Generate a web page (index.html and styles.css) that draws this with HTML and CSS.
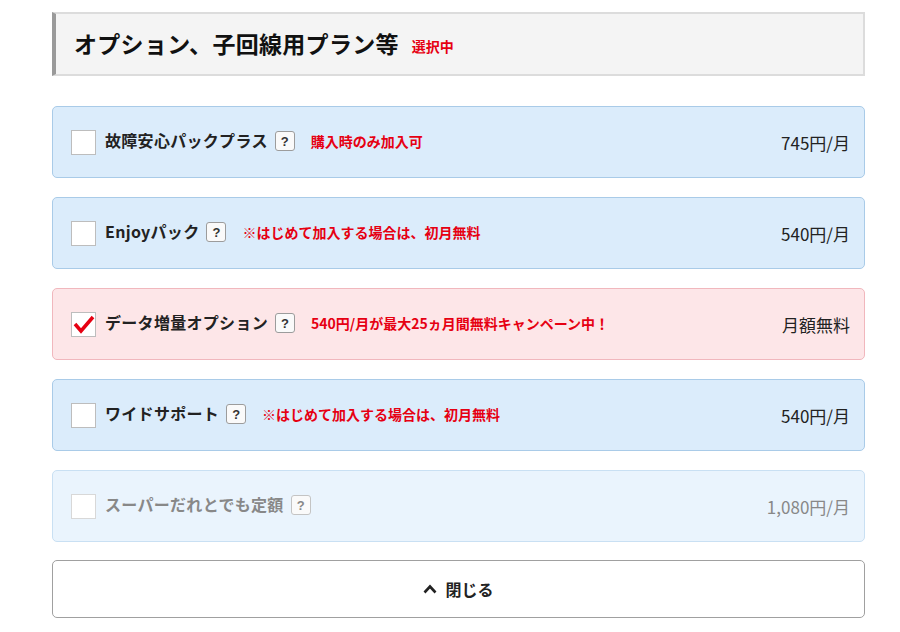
FILE: index.html
```html
<!DOCTYPE html>
<html lang="ja">
<head>
  <meta charset="UTF-8">
  <title>オプション、子回線用プラン等</title>
  <link rel="stylesheet" href="styles.css">
</head>
<body>
  <div class="wrap">
    <div class="section-head">
      <h2>オプション、子回線用プラン等</h2>
      <span class="selected">選択中</span>
    </div>

    <ul class="options">
      <li class="option">
        <span class="check"></span>
        <span class="name">故障安心パックプラス</span>
        <span class="help">?</span>
        <span class="note">購入時のみ加入可</span>
        <span class="price">745円/月</span>
      </li>
      <li class="option">
        <span class="check"></span>
        <span class="name">Enjoyパック</span>
        <span class="help">?</span>
        <span class="note">※はじめて加入する場合は、初月無料</span>
        <span class="price">540円/月</span>
      </li>
      <li class="option is-checked">
        <span class="check">
          <svg viewBox="0 0 25 25" width="25" height="25"><polyline points="4,12 10,19 22,5" fill="none" stroke="#e60012" stroke-width="3.5" stroke-linejoin="miter"/></svg>
        </span>
        <span class="name">データ増量オプション</span>
        <span class="help">?</span>
        <span class="note">540円/月が最大25ヵ月間無料キャンペーン中！</span>
        <span class="price">月額無料</span>
      </li>
      <li class="option">
        <span class="check"></span>
        <span class="name">ワイドサポート</span>
        <span class="help">?</span>
        <span class="note">※はじめて加入する場合は、初月無料</span>
        <span class="price">540円/月</span>
      </li>
      <li class="option is-disabled">
        <span class="check"></span>
        <span class="name">スーパーだれとでも定額</span>
        <span class="help">?</span>
        <span class="price">1,080円/月</span>
      </li>
    </ul>

    <button class="close-btn">
      <svg viewBox="0 0 14 10" width="14" height="10"><polyline points="1.5,8.5 7,2.5 12.5,8.5" fill="none" stroke="#222" stroke-width="2.6"/></svg>
      閉じる
    </button>
  </div>
</body>
</html>
```

FILE: styles.css
```css
body {
  margin: 0;
  background: #fff;
  color: #222;
  font-family: "Noto Sans CJK JP", "Noto Sans", sans-serif;
}
.wrap {
  width: 813px;
  margin-left: 52px;
  padding-top: 12px;
}
/* section title bar */
.section-head {
  display: flex;
  align-items: center;
  box-sizing: border-box;
  height: 64px;
  padding-left: 18px;
  background: #f4f4f4;
  border: 2px solid #dcdcdc;
  border-left: 4px solid #9a9a9a;
}
.section-head h2 {
  margin: 0 0 2px;
  font-size: 23px;
  font-weight: bold;
  color: #111;
  letter-spacing: 0.3px;
}
.selected {
  margin-left: 13px;
  margin-top: 4px;
  font-size: 14px;
  font-weight: bold;
  color: #e60012;
}
/* option list */
.options {
  list-style: none;
  margin: 30px 0 0;
  padding: 0;
}
.option {
  display: flex;
  align-items: center;
  height: 72px;
  box-sizing: border-box;
  margin-bottom: 19px;
  padding: 0 14px 0 18px;
  background: #dbecfb;
  border: 1px solid #a9cbe8;
  border-radius: 5px;
}
.option.is-checked {
  background: #fde6e8;
  border-color: #f1b7bd;
}
.option.is-disabled {
  background: #eaf4fd;
  border-color: #c9e0f3;
}
.check {
  width: 25px;
  height: 25px;
  box-sizing: border-box;
  margin-top: 1px;
  background: #fff;
  border: 1px solid #bdbdbd;
  flex-shrink: 0;
}
.check svg {
  display: block;
  margin: -1px;
}
.is-disabled .check {
  border-color: #d8d8d8;
}
.name {
  margin: 0 0 4px 9px;
  font-size: 16px;
  font-weight: bold;
  color: #222;
  letter-spacing: 0.3px;
}
.is-disabled .name {
  color: #888;
}
.help {
  display: inline-flex;
  align-items: center;
  justify-content: center;
  width: 20px;
  height: 20px;
  box-sizing: border-box;
  margin: 0 0 2px 7px;
  background: #fafafa;
  border: 1px solid #9c9c9c;
  border-radius: 3px;
  font-family: "Liberation Sans", sans-serif;
  font-size: 13px;
  font-weight: bold;
  color: #333;
}
.is-disabled .help {
  border-color: #c4c4c4;
  color: #888;
}
.note {
  margin: 0 0 2px 16px;
  font-size: 14px;
  font-weight: bold;
  color: #e60012;
}
.price {
  margin-left: auto;
  font-size: 17px;
  color: #222;
}
.is-disabled .price {
  color: #888;
}
/* close button */
.close-btn {
  display: flex;
  align-items: center;
  justify-content: center;
  gap: 8px;
  width: 100%;
  height: 58px;
  margin-top: -1px;
  background: #fff;
  border: 1px solid #a0a0a0;
  border-radius: 5px;
  font-family: inherit;
  font-size: 16px;
  font-weight: bold;
  color: #222;
  cursor: pointer;
}
```
